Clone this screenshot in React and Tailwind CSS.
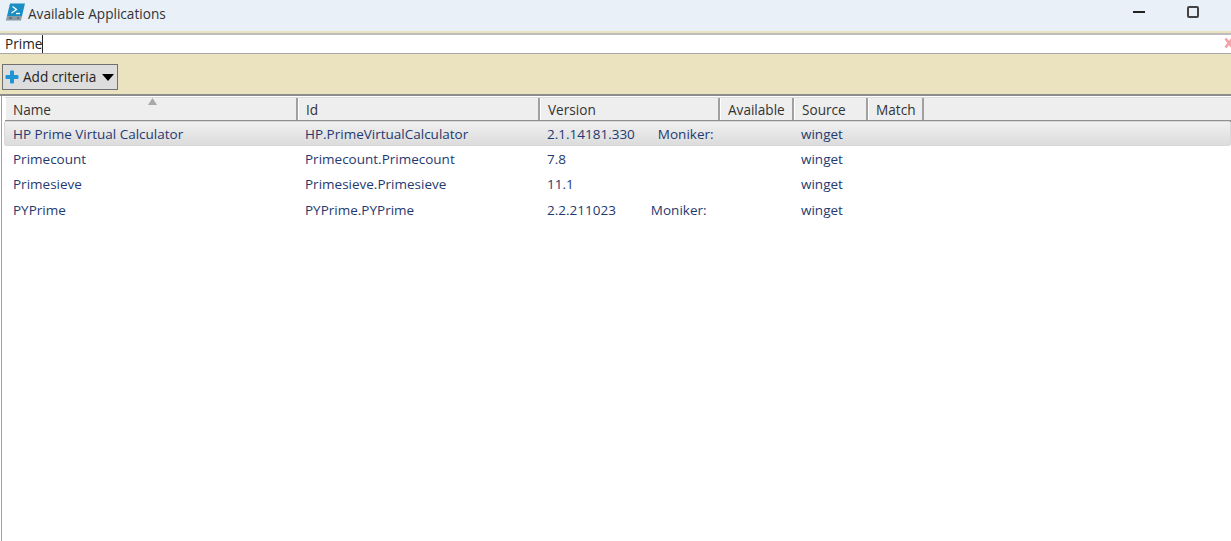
import React from 'react';

const COLUMNS = [
  { name: 'Name', width: 'w-[293px]' },
  { name: 'Id', width: 'w-[242px]' },
  { name: 'Version', width: 'w-[180px]' },
  { name: 'Available', width: 'w-[74px]' },
  { name: 'Source', width: 'w-[74px]' },
  { name: 'Match', width: 'w-[56px]' }
];

const APPS = [
  { name: 'HP Prime Virtual Calculator', id: 'HP.PrimeVirtualCalculator', version: '2.1.14181.330', moniker: 'ml-[23px]', selected: true },
  { name: 'Primecount', id: 'Primecount.Primecount', version: '7.8' },
  { name: 'Primesieve', id: 'Primesieve.Primesieve', version: '11.1' },
  { name: 'PYPrime', id: 'PYPrime.PYPrime', version: '2.2.211023', moniker: 'ml-[35px]' }
];

function PowerShellIcon() {
  return (
    <svg width="20" height="18" viewBox="0 0 20 18" className="shrink-0">
      <path d="M5 0.5h15L17 13H2z" fill="#1b8fc4" />
      <path d="M2 13h15l-1 4.500H0.800z" fill="#8a9aa3" />
      <path d="M7.500 3.500l4 3-5 3.500" fill="none" stroke="#fff" strokeWidth="1.300" />
      <path d="M11 10.500h4" stroke="#fff" strokeWidth="1.300" />
      <path d="M4 15h3M12 15h2" stroke="#3f5560" strokeWidth="1" />
    </svg>
  );
}

function AppRow({ app }) {
  const rowClass = app.selected
    ? 'h-[25.4px] ml-[2px] border border-[#d9d9d9] rounded-[2px] bg-gradient-to-b from-[#f0f0f0] to-[#dcdcdc]'
    : 'h-[25.4px] ml-[2px] border border-transparent';
  return (
    <div className={`flex items-center text-[13.5px] text-[#1f3a70] ${rowClass}`}>
      <span className="w-[292px] pl-[8px] shrink-0">{app.name}</span>
      <span className="w-[242px] pl-[8px] shrink-0">{app.id}</span>
      <span className="w-[254px] pl-[8px] shrink-0 flex">
        <span>{app.version}</span>
        {app.moniker && <span className={app.moniker}>Moniker:</span>}
      </span>
      <span className="pl-[8px]">winget</span>
    </div>
  );
}

export default function App() {
  return (
    <div className="w-[1231px] h-[541px] overflow-hidden bg-white flex flex-col font-['Open_Sans','Noto_Sans',sans-serif] text-[13.6px] text-[#222]">
      {/* Title bar */}
      <div className="h-[31px] bg-[#e9f0f8] flex items-start pl-[5px] pt-[3px] shrink-0">
        <PowerShellIcon />
        <span className="ml-[3px] mt-[1px] text-[#333] leading-[20px]">Available Applications</span>
        <div className="ml-auto flex items-center mr-[32px] mt-[3px] gap-[42px]">
          <div className="w-[12px] h-[1.5px] bg-[#222]" />
          <div className="w-[12px] h-[12px] border-[2px] border-[#444] rounded-[2px]" />
        </div>
      </div>

      {/* Search */}
      <div className="bg-[#ebe3bf] pt-[2px] shrink-0">
        <div className="h-[21px] bg-white border-b border-[#a8a8a8] border-t-2 border-t-[#bdbdbd] flex items-center pl-[5px] relative">
          <span className="border-r border-[#222] leading-[18px] text-[#222]">Prime</span>
          <svg width="10" height="12" viewBox="0 0 10 12" className="absolute right-[-3px] top-[2px]">
            <path d="M1.500 1.500L8.500 10.500M8.500 1.500L1.500 10.500" stroke="#f5a0a6" strokeWidth="2.600" />
          </svg>
        </div>
      </div>

      {/* Criteria bar */}
      <div className="h-[42px] bg-[#ebe3bf] flex items-start pt-[10px] pl-[2px] border-b-2 border-[#8c8c8c] shrink-0">
        <button className="h-[26px] w-[116px] bg-[#dddddd] border border-[#707070] flex items-center pl-[2px] text-[#222]">
          <svg width="14" height="14" viewBox="0 0 14 14" className="shrink-0">
            <path d="M5 1.500a1 1 0 0 1 1-1h2a1 1 0 0 1 1 1V5h3.500a1 1 0 0 1 1 1v2a1 1 0 0 1-1 1H9v3.500a1 1 0 0 1-1 1H6a1 1 0 0 1-1-1V9H1.500a1 1 0 0 1-1-1V6a1 1 0 0 1 1-1H5z" fill="#1f95d6" />
          </svg>
          <span className="ml-[4px]">Add criteria</span>
          <svg width="12" height="7" viewBox="0 0 12 7" className="ml-[6px] shrink-0">
            <path d="M0 0h12L6 7z" fill="#000" />
          </svg>
        </button>
      </div>

      {/* Grid */}
      <div className="flex-1 border-l border-[#a0a0a0] ml-[1px] flex flex-col">
        <div className="h-[25px] ml-[3px] mt-[1px] mb-[-1px] flex bg-[#eeeeee] border-t border-[#dcdcdc] border-b-2 border-b-[#8f8f8f] shrink-0">
          {COLUMNS.map((col, i) => (
            <div
              key={col.name}
              className={`${col.width} shrink-0 border-r-2 border-r-[#a0a0a0] border-l border-l-white pl-[7px] pt-[2px] text-[#333] relative`}
            >
              {col.name}
              {i === 0 && (
                <svg width="9" height="7" viewBox="0 0 9 7" className="absolute left-[142px] top-[0px]">
                  <path d="M4.5 0L9 7H0z" fill="#a8a8a8" />
                </svg>
              )}
            </div>
          ))}
          <div className="flex-1" />
        </div>
        {APPS.map(app => (
          <AppRow key={app.id} app={app} />
        ))}
      </div>
    </div>
  );
}
